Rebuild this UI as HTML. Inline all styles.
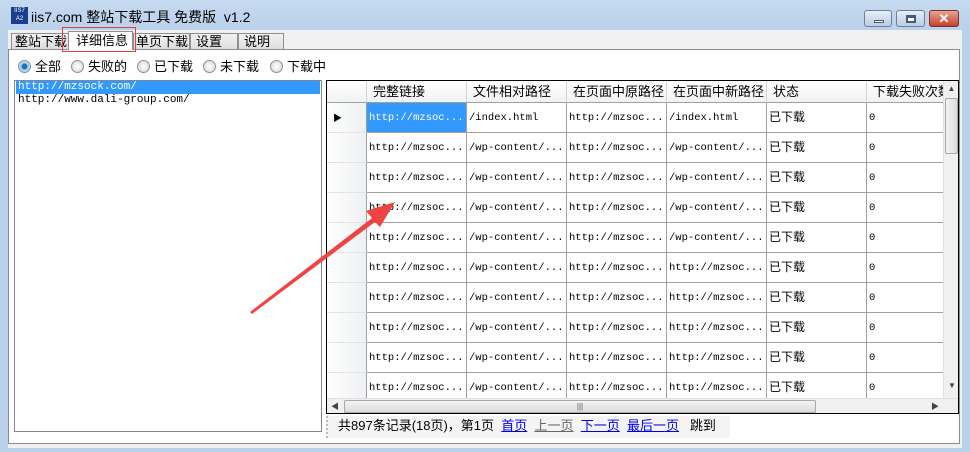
<!DOCTYPE html>
<html><head><meta charset="utf-8"><style>
*{margin:0;padding:0;box-sizing:border-box}
body{width:970px;height:452px;overflow:hidden;background:#b9d1ea;font-family:"Liberation Sans","Noto Sans CJK SC",sans-serif;font-size:12px;position:relative}
.abs{position:absolute}
.title{left:0;top:0;width:970px;height:30px;background:linear-gradient(#c6daf0,#b9d1ea)}
.inner{left:8px;top:30px;width:954px;height:418px;background:#f0f0f0}
.tab{top:33px;height:17px;border:1px solid #8e8f8f;border-bottom:none;background:linear-gradient(#f2f2f2,#dcdcdc);font-size:13px;line-height:15px;padding-left:3px;color:#000;white-space:nowrap;overflow:visible}
.panel{left:8px;top:49px;width:952px;height:395px;background:#fff;border:1px solid #898c95}
.radio{top:60px;font-size:13px;line-height:14px}
.rd{display:inline-block;width:13px;height:13px;border-radius:50%;border:1px solid #8e8f8f;background:radial-gradient(#fff,#d4d4d4);vertical-align:-2px;margin-right:4px}
.mono{font-family:"Liberation Mono","DejaVu Sans Mono",monospace;font-size:10.5px}
.grid{left:326px;top:80px;width:633px;height:334px;border:1px solid #000;background:#fff;overflow:hidden}
.cell{position:absolute;height:30px;border-right:1px solid #a0a0a0;border-bottom:1px solid #a0a0a0;padding:0 2px;line-height:31px;white-space:nowrap;overflow:hidden}
.hd{position:absolute;top:0;height:22px;border-right:1px solid #d5d5d5;border-bottom:1px solid #a0a0a0;background:linear-gradient(#fff,#f1f2f4);font-size:13px;line-height:21px;padding-left:6px;white-space:nowrap;overflow:hidden}
a{color:#0000ee}
</style></head><body>
<div class="abs title"></div>
<div class="abs" style="left:11px;top:7px;width:17px;height:17px;background:#1b3d8f;color:#fff;font-size:6px;line-height:8px;text-align:center">IIS7<br>A2</div>
<div class="abs" style="left:31px;top:9px;font-size:14px;line-height:16px">iis7.com 整站下载工具 免费版&nbsp; v1.2</div>
<div class="abs" style="left:864px;top:10px;width:28px;height:17px;border:1px solid #6d7f99;border-radius:3px;background:linear-gradient(#e6eefa,#bccce3)"><div class="abs" style="left:9px;top:9px;width:10px;height:3px;background:#fff;border:1px solid #475a7a"></div></div>
<div class="abs" style="left:896px;top:10px;width:29px;height:17px;border:1px solid #6d7f99;border-radius:3px;background:linear-gradient(#e6eefa,#bccce3)"><div class="abs" style="left:9px;top:4px;width:10px;height:8px;border:2px solid #475a7a;border-top-width:3px;background:#fff"></div></div>
<div class="abs" style="left:929px;top:10px;width:30px;height:17px;border:1px solid #7a2e25;border-radius:3px;background:linear-gradient(#e8a493,#c5412c);color:#fff;font-weight:bold;text-align:center;line-height:15px;font-size:13px">✕</div>
<div class="abs inner"></div>
<div class="abs tab" style="left:11px;width:60px">整站下载</div>
<div class="abs tab" style="left:133px;width:57px;padding-left:2px">单页下载</div>
<div class="abs tab" style="left:190px;width:48px;padding-left:5px">设置</div>
<div class="abs tab" style="left:238px;width:46px;padding-left:5px">说明</div>
<div class="abs panel"></div>
<div class="abs tab" style="left:68px;top:31px;width:65px;height:19px;background:#fff;border-color:#8e8f8f;line-height:17px;padding-left:7px">详细信息</div>
<div class="abs" style="left:62px;top:27px;width:74px;height:25px;border:1px solid #e04040"></div>
<div class="abs radio" style="left:18px"><span class="rd" style="background:radial-gradient(#1a6fc0 30%,#9cd0f5 45%,#dfe9f3)"></span>全部</div>
<div class="abs radio" style="left:71px"><span class="rd"></span>失败的</div>
<div class="abs radio" style="left:137px"><span class="rd"></span>已下载</div>
<div class="abs radio" style="left:203px"><span class="rd"></span>未下载</div>
<div class="abs radio" style="left:270px"><span class="rd"></span>下载中</div>
<div class="abs" style="left:14px;top:80px;width:308px;height:352px;border:1px solid #828790;background:#fff"></div>
<div class="abs mono" style="left:16px;top:81px;width:304px;height:13px;background:#3399ff;color:#fff;line-height:13px;padding-left:2px;font-size:11px">http://mzsock.com/</div>
<div class="abs mono" style="left:16px;top:94px;line-height:13px;padding-left:2px;font-size:11px">http://www.dali-group.com/</div>
<div class="abs grid">
<div class="hd" style="left:0;width:40px;padding:0"></div>
<div class="hd" style="left:40px;width:100px">完整链接</div>
<div class="hd" style="left:140px;width:100px">文件相对路径</div>
<div class="hd" style="left:240px;width:100px">在页面中原路径</div>
<div class="hd" style="left:340px;width:100px">在页面中新路径</div>
<div class="hd" style="left:440px;width:100px">状态</div>
<div class="hd" style="left:540px;width:80px">下载失败次数</div>
<div id="rows"></div>
<div class="abs" style="left:616px;top:0;width:16px;height:317px;background:#f0f0f0;border-left:1px solid #e0e0e0"><div style="text-align:center;font-size:8px;color:#444;line-height:16px">▲</div><div class="abs" style="left:1px;top:17px;width:13px;height:56px;border:1px solid #a8a8a8;border-radius:2px;background:linear-gradient(90deg,#f4f4f4,#dcdcdc)"></div><div class="abs" style="left:0;top:300px;width:16px;text-align:center;font-size:8px;color:#444">▼</div></div>
<div class="abs" style="left:0;top:317px;width:632px;height:16px;background:#f0f0f0;border-top:1px solid #e0e0e0"><div class="abs" style="left:4px;top:2px;font-size:8px;color:#444">◀</div><div class="abs" style="left:17px;top:1px;width:472px;height:13px;border:1px solid #a8a8a8;border-radius:2px;background:linear-gradient(#f4f4f4,#dcdcdc);text-align:center;font-size:8px;line-height:11px;color:#555">|||</div><div class="abs" style="left:604px;top:2px;font-size:8px;color:#444">▶</div></div>
</div>
<div class="abs" style="left:326px;top:416px;width:404px;height:22px;background:#f4f4f4;font-size:13px;line-height:20px;padding-left:10px;border-left:2px dotted #bbb">共897条记录(18页)，第1页 &nbsp;<a style="text-decoration:underline">首页</a>&nbsp; <span style="color:#666;text-decoration:underline">上一页</span>&nbsp; <a style="text-decoration:underline">下一页</a>&nbsp; <a style="text-decoration:underline">最后一页</a>&nbsp;&nbsp; 跳到</div>
<svg class="abs" style="left:0;top:0" width="970" height="452"><path d="M250 312 L372 218 L366 211 L395 202 L380 227 L375 222 L252 314 Z" fill="#f04444"/></svg>
<script>
var r='',p=[['/index.html','/index.html'],['/wp-content/...','/wp-content/...'],['/wp-content/...','/wp-content/...'],['/wp-content/...','/wp-content/...'],['/wp-content/...','/wp-content/...'],['/wp-content/...','http://mzsoc...'],['/wp-content/...','http://mzsoc...'],['/wp-content/...','http://mzsoc...'],['/wp-content/...','http://mzsoc...'],['/wp-content/...','http://mzsoc...']];
for(var i=0;i<10;i++){var t=22+i*30;
r+='<div class="cell" style="left:0;top:'+t+'px;width:40px;background:linear-gradient(90deg,#fff,#eef0f3);border-right:1px solid #a0a0a0;border-bottom:1px solid #e4e4e4">'+(i==0?'<span style="position:absolute;left:6px;font-size:9px">▶</span>':'')+'</div>';
r+='<div class="cell mono" style="left:40px;top:'+t+'px;width:100px;'+(i==0?'background:#3399ff;color:#fff':'')+'">http://mzsoc...</div>';
r+='<div class="cell mono" style="left:140px;top:'+t+'px;width:100px">'+p[i][0]+'</div>';
r+='<div class="cell mono" style="left:240px;top:'+t+'px;width:100px">http://mzsoc...</div>';
r+='<div class="cell mono" style="left:340px;top:'+t+'px;width:100px">'+p[i][1]+'</div>';
r+='<div class="cell" style="left:440px;top:'+t+'px;width:100px;font-size:12px;line-height:29px">已下载</div>';
r+='<div class="cell mono" style="left:540px;top:'+t+'px;width:80px">0</div>';}
document.getElementById('rows').innerHTML=r;
</script>
</body></html>
